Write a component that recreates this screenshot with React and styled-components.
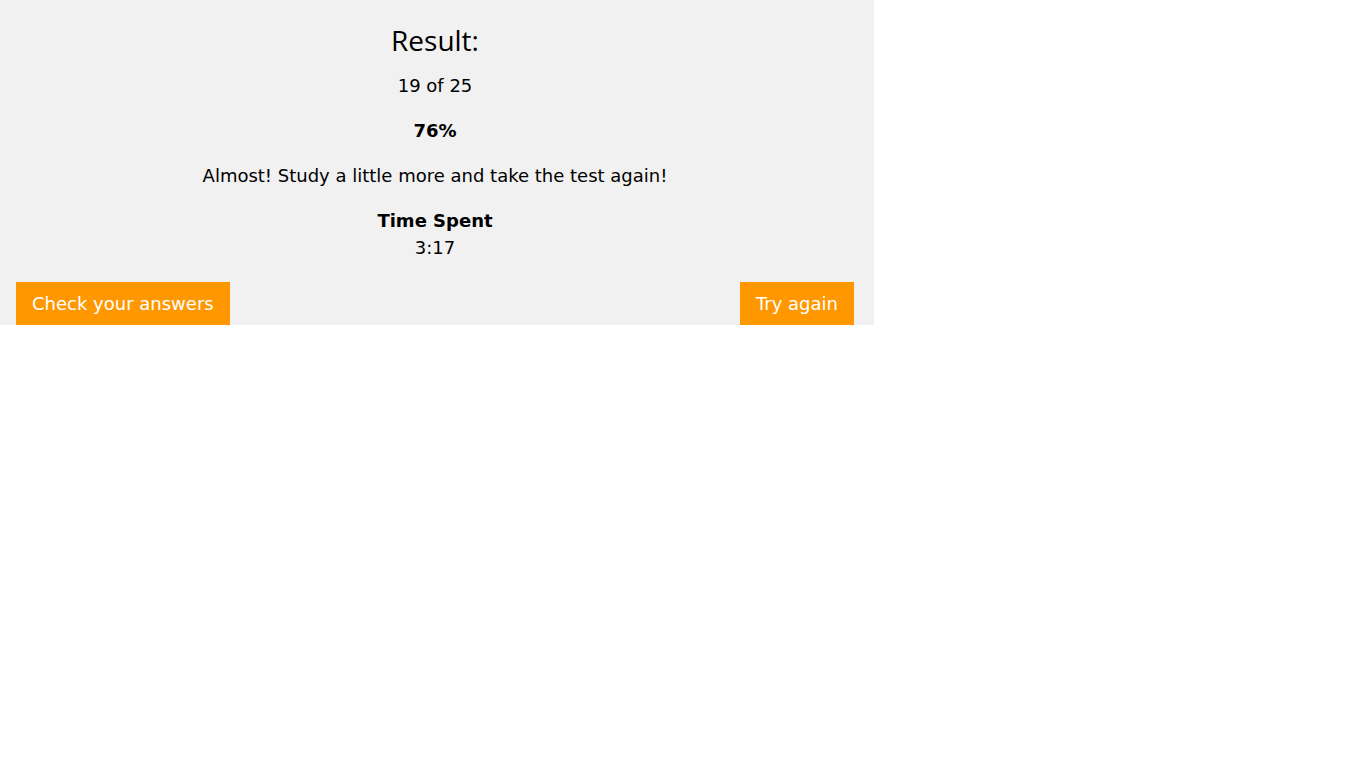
import styled, { createGlobalStyle } from 'styled-components'

const GlobalStyle = createGlobalStyle`
  body {
    margin: 0;
    background: #ffffff;
    font-family: 'DejaVu Sans', Verdana, sans-serif;
  }
`

const ResultPanel = styled.div`
  width: 874px;
  background: #f1f1f1;
  box-sizing: border-box;
  padding: 20px 20px 0 16px;
  text-align: center;
  color: #000;
`

const Title = styled.h2`
  margin: 0 0 12px;
  font-family: 'Open Sans', 'Noto Sans', sans-serif;
  font-weight: 400;
  font-size: 28px;
  line-height: 40px;
`

const Line = styled.p`
  margin: 0 0 ${({ $tight }) => ($tight ? '0' : '18px')};
  font-size: 18px;
  line-height: 27px;
  font-weight: ${({ $bold }) => ($bold ? 700 : 400)};
`

const Actions = styled.div`
  display: flex;
  justify-content: space-between;
  margin-top: 21px;
`

const OrangeButton = styled.button`
  border: none;
  background: #ff9800;
  color: #fff;
  font-family: 'DejaVu Sans', Verdana, sans-serif;
  font-size: 18px;
  line-height: 27px;
  padding: 8px 16px;
  cursor: pointer;
`

export default function App() {
  return (
    <>
      <GlobalStyle />
      <ResultPanel>
        <Title>Result:</Title>
        <Line>19 of 25</Line>
        <Line $bold>76%</Line>
        <Line>Almost! Study a little more and take the test again!</Line>
        <Line $bold $tight>Time Spent</Line>
        <Line $tight>3:17</Line>
        <Actions>
          <OrangeButton>Check your answers</OrangeButton>
          <OrangeButton>Try again</OrangeButton>
        </Actions>
      </ResultPanel>
    </>
  )
}
